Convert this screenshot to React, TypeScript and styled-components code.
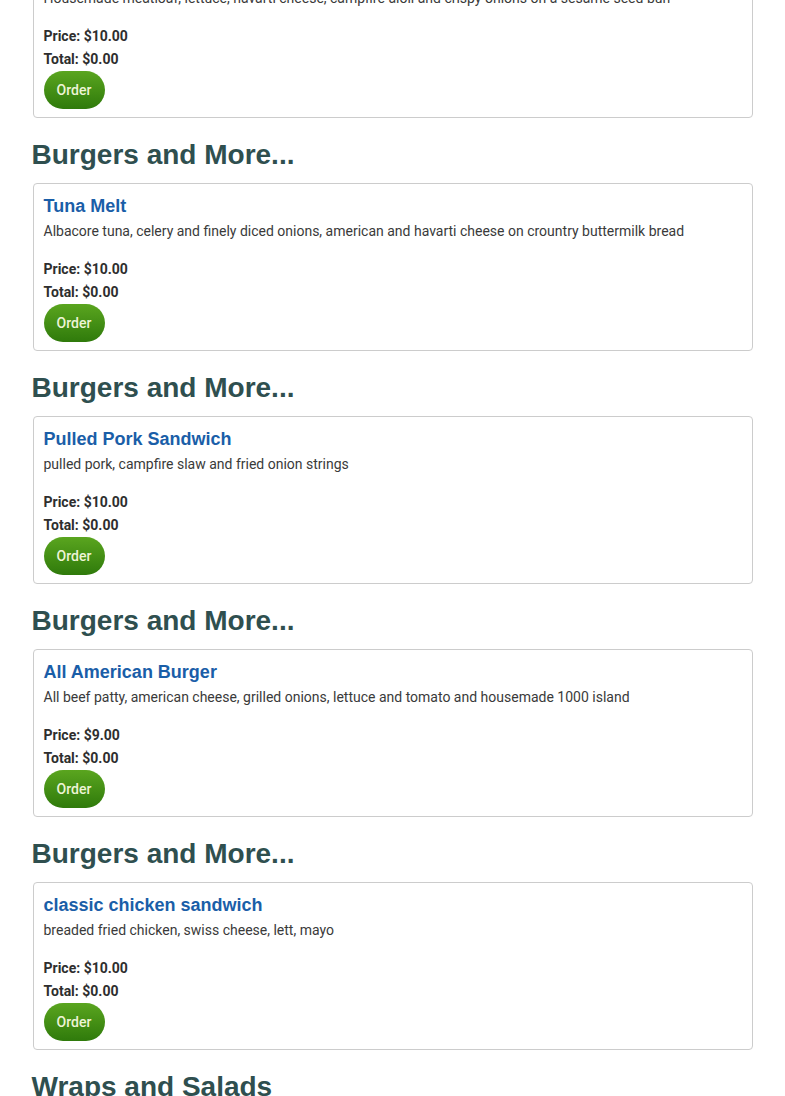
import React from "react";
import styled, {createGlobalStyle} from "styled-components";

const GlobalStyle = createGlobalStyle`
    html, body {
        margin: 0;
        padding: 0;
        background: #ffffff;
    }
    body {
        font-family: Roboto, "Liberation Sans", sans-serif;
        color: #333333;
    }
`;

// the page is shown scrolled, so the first card sits partly above the top edge
const Page = styled.div`
    margin: -115px auto 0;
    max-width: 720px;
    padding: 0 0 40px;
`;

const SectionTitle = styled.h2`
    color: #2f4f4f;
    font-family: "Liberation Sans", Arial, sans-serif;
    font-size: 28px;
    font-weight: 700;
    line-height: 33px;
    margin: 20px 0 12px -1px;
`;

const Card = styled.div`
    border: 1px solid #cccccc;
    border-radius: 4px;
    display: flex;
    flex-direction: column;
    padding: 11px 10px 8px;
`;

const ItemName = styled.h4`
    color: #1a5ea8;
    font-family: "Liberation Sans", Arial, sans-serif;
    font-size: 18px;
    font-weight: 700;
    line-height: 20px;
    margin: 1px 0 0;
`;

const Description = styled.p`
    color: #3a3a3a;
    font-size: 14px;
    line-height: 20px;
    margin: 5px 0 17px;
`;

const Amount = styled.div`
    color: #2e2e2e;
    font-size: 14px;
    font-weight: 700;
    line-height: 23px;
`;

const OrderButton = styled.button`
    align-self: flex-start;
    background: linear-gradient(to bottom, #5aa51f 0%, #2f7a0b 100%);
    border: none;
    border-radius: 19px;
    color: #eef4d6;
    cursor: pointer;
    font-family: Roboto, sans-serif;
    font-size: 14px;
    font-weight: 500;
    height: 38px;
    padding: 0 13px;
    width: 61px;
`;

type Item = {
    section: string;
    name: string;
    description: string;
    price: string;
};

const items: Item[] = [
    {
        section: "Burgers and More...",
        name: "Meatloaf Sandwich",
        description:
            "Housemade meatloaf, lettuce, havarti cheese, campfire aioli and crispy onions on a sesame seed bun",
        price: "$10.00",
    },
    {
        section: "Burgers and More...",
        name: "Tuna Melt",
        description:
            "Albacore tuna, celery and finely diced onions, american and havarti cheese on crountry buttermilk bread",
        price: "$10.00",
    },
    {
        section: "Burgers and More...",
        name: "Pulled Pork Sandwich",
        description: "pulled pork, campfire slaw and fried onion strings",
        price: "$10.00",
    },
    {
        section: "Burgers and More...",
        name: "All American Burger",
        description:
            "All beef patty, american cheese, grilled onions, lettuce and tomato and housemade 1000 island",
        price: "$9.00",
    },
    {
        section: "Burgers and More...",
        name: "classic chicken sandwich",
        description: "breaded fried chicken, swiss cheese, lett, mayo",
        price: "$10.00",
    },
];

const MenuCard: React.FunctionComponent<{item: Item}> = ({item}) => (
    <>
        <SectionTitle>{item.section}</SectionTitle>
        <Card>
            <ItemName>{item.name}</ItemName>
            <Description>{item.description}</Description>
            <Amount>Price: {item.price}</Amount>
            <Amount>Total: $0.00</Amount>
            <OrderButton>Order</OrderButton>
        </Card>
    </>
);

export default function App() {
    return (
        <>
            <GlobalStyle />
            <Page>
                {items.map((item) => (
                    <MenuCard key={item.name} item={item} />
                ))}
                <SectionTitle>Wraps and Salads</SectionTitle>
            </Page>
        </>
    );
}
